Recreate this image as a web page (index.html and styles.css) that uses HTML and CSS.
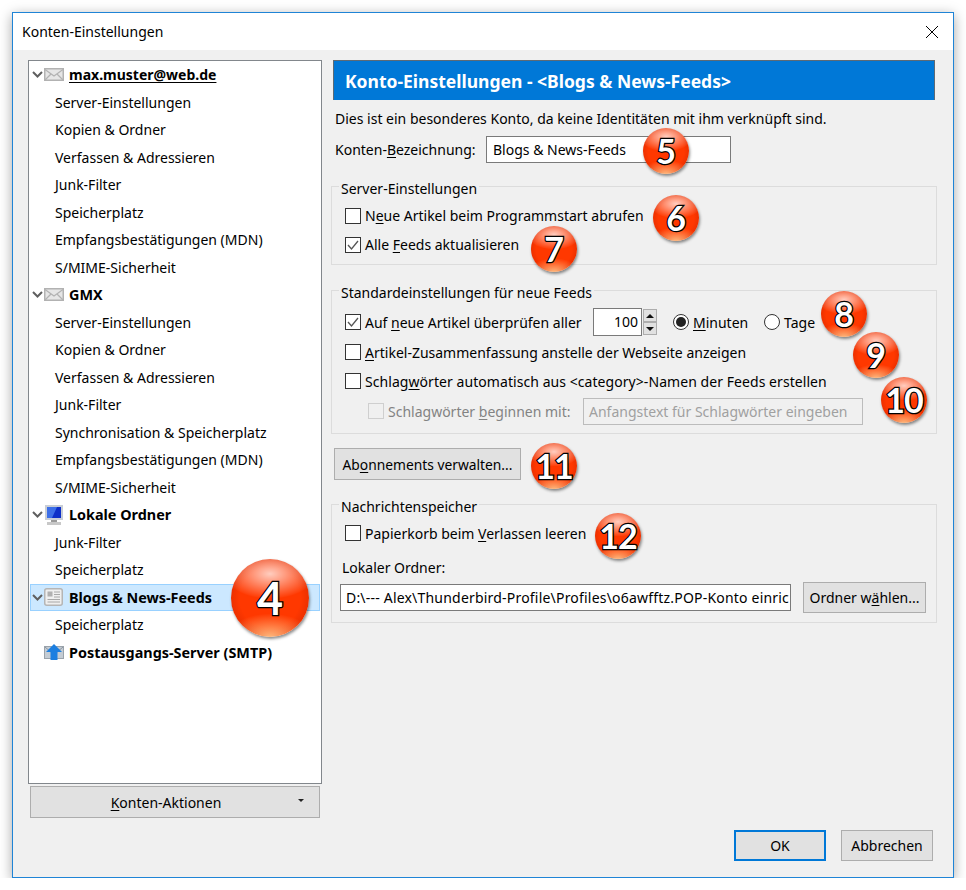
FILE: index.html
```html
<!DOCTYPE html>
<html lang="de">
<head>
    <meta charset="UTF-8">
    <title>Konten-Einstellungen</title>
    <link rel="stylesheet" href="styles.css">
</head>
<body>
    <div class="window">
        <div class="titlebar">
            <span>Konten-Einstellungen</span>
            <svg class="close" width="12" height="12" viewBox="0 0 12 12"><path d="M0 0L12 12M12 0L0 12" stroke="#000" stroke-width="1" fill="none"/></svg>
        </div>
        <div class="content">
            <div class="left-col">
                <div class="tree">
                    <div class="tree-head">
                        <svg class="chevron" width="11" height="7" viewBox="0 0 11 7"><path d="M1 1L5.5 5.5L10 1" stroke="#5f5f5f" stroke-width="2" fill="none"/></svg>
                        <svg class="acc-icon" width="20" height="13" viewBox="0 0 20 13"><rect x="0.75" y="0.75" width="18.5" height="11.5" fill="#e6e6e6" stroke="#b2b2b2" stroke-width="1.5"/><path d="M1 1.5L10 8L19 1.5M1 12L7 6M19 12L13 6" stroke="#b2b2b2" stroke-width="1.2" fill="none"/></svg>
                        <u class="current">max.muster@web.de</u>
                    </div>
                    <div class="tree-item">Server-Einstellungen</div>
                    <div class="tree-item">Kopien &amp; Ordner</div>
                    <div class="tree-item">Verfassen &amp; Adressieren</div>
                    <div class="tree-item">Junk-Filter</div>
                    <div class="tree-item">Speicherplatz</div>
                    <div class="tree-item">Empfangsbestätigungen (MDN)</div>
                    <div class="tree-item">S/MIME-Sicherheit</div>
                    <div class="tree-head">
                        <svg class="chevron" width="11" height="7" viewBox="0 0 11 7"><path d="M1 1L5.5 5.5L10 1" stroke="#5f5f5f" stroke-width="2" fill="none"/></svg>
                        <svg class="acc-icon" width="20" height="13" viewBox="0 0 20 13"><rect x="0.75" y="0.75" width="18.5" height="11.5" fill="#e6e6e6" stroke="#b2b2b2" stroke-width="1.5"/><path d="M1 1.5L10 8L19 1.5M1 12L7 6M19 12L13 6" stroke="#b2b2b2" stroke-width="1.2" fill="none"/></svg>
                        <span>GMX</span>
                    </div>
                    <div class="tree-item">Server-Einstellungen</div>
                    <div class="tree-item">Kopien &amp; Ordner</div>
                    <div class="tree-item">Verfassen &amp; Adressieren</div>
                    <div class="tree-item">Junk-Filter</div>
                    <div class="tree-item">Synchronisation &amp; Speicherplatz</div>
                    <div class="tree-item">Empfangsbestätigungen (MDN)</div>
                    <div class="tree-item">S/MIME-Sicherheit</div>
                    <div class="tree-head">
                        <svg class="chevron" width="11" height="7" viewBox="0 0 11 7"><path d="M1 1L5.5 5.5L10 1" stroke="#5f5f5f" stroke-width="2" fill="none"/></svg>
                        <svg class="acc-icon" width="20" height="20" viewBox="0 0 20 20"><rect x="1" y="0" width="18" height="15" fill="#c9ced6"/><rect x="3" y="2" width="14" height="11" fill="#0d2fc9"/><path d="M3 2H13L8 13H3Z" fill="#3d6fe8"/><rect x="7" y="15" width="6" height="2" fill="#9a9a9a"/><rect x="3" y="17" width="14" height="3" fill="#c8c8c8"/></svg>
                        <span>Lokale Ordner</span>
                    </div>
                    <div class="tree-item">Junk-Filter</div>
                    <div class="tree-item">Speicherplatz</div>
                    <div class="tree-head selected">
                        <svg class="chevron" width="11" height="7" viewBox="0 0 11 7"><path d="M1 1L5.5 5.5L10 1" stroke="#5f5f5f" stroke-width="2" fill="none"/></svg>
                        <svg class="acc-icon" width="19" height="18" viewBox="0 0 19 18"><rect x="0.75" y="0.75" width="17.5" height="16.5" rx="2" fill="#efefef" stroke="#b5b5b5" stroke-width="1.5"/><rect x="3.5" y="3.5" width="5" height="5" fill="#b0b0b0"/><path d="M10 4H16M10 6.5H16M10 9H16M3.5 11.5H16M3.5 14H16" stroke="#a8a8a8"/></svg>
                        <span>Blogs &amp; News-Feeds</span>
                    </div>
                    <div class="tree-item">Speicherplatz</div>
                    <div class="tree-head no-chevron">
                        <svg class="acc-icon" width="20" height="16" viewBox="0 0 20 16"><rect x="0.5" y="2.5" width="19" height="12" fill="#c4ccd4" stroke="#9aa3ab"/><path d="M1 3L8 9M19 3L12 9" stroke="#8d97a1"/><path d="M10 0L18 8H13.5V16H6.5V8H2Z" fill="#1c7fe0"/></svg>
                        <span>Postausgangs-Server (SMTP)</span>
                    </div>
                </div>
                <button class="btn actions-btn"><span><u>K</u>onten-Aktionen</span><i class="drop"></i></button>
            </div>

            <div class="right-col">
                <div class="panel-head">Konto-Einstellungen - &lt;Blogs &amp; News-Feeds&gt;</div>
                <div class="note">Dies ist ein besonderes Konto, da keine Identitäten mit ihm verknüpft sind.</div>
                <div class="name-row">
                    <label class="name-label">Konten-<u>B</u>ezeichnung:</label>
                    <div class="textbox name-box">Blogs &amp; News-Feeds</div>
                </div>

                <div class="group server-group">
                    <div class="legend">Server-Einstellungen</div>
                    <div class="row tall"><span class="check"></span><span>N<u>e</u>ue Artikel beim Programmstart abrufen</span></div>
                    <div class="row tall"><span class="check"><svg width="14" height="14" viewBox="0 0 14 14"><path d="M2 7L5.5 11L12 3" stroke="#555" stroke-width="1.3" fill="none"/></svg></span><span>Alle <u>F</u>eeds aktualisieren</span></div>
                </div>

                <div class="group feeds-group">
                    <div class="legend">Standardeinstellungen für neue Feeds</div>
                    <div class="row first">
                        <span class="check"><svg width="14" height="14" viewBox="0 0 14 14"><path d="M2 7L5.5 11L12 3" stroke="#555" stroke-width="1.3" fill="none"/></svg></span>
                        <span class="interval-label">Auf <u>n</u>eue Artikel überprüfen aller</span>
                        <div class="textbox spin-box">100</div>
                        <div class="spin">
                            <span class="spin-btn"><i class="arrow-up"></i></span>
                            <span class="spin-btn"><i class="arrow-down"></i></span>
                        </div>
                        <span class="radio on minutes"></span><span class="minutes-label"><u>M</u>inuten</span>
                        <span class="radio"></span><span>Ta<u>g</u>e</span>
                    </div>
                    <div class="row second"><span class="check"></span><span><u>A</u>rtikel-Zusammenfassung anstelle der Webseite anzeigen</span></div>
                    <div class="row third"><span class="check"></span><span class="tags-label">Schlag<u>w</u>örter automatisch aus &lt;category&gt;-Namen der Feeds erstellen</span></div>
                    <div class="row indented">
                        <span class="check disabled"></span>
                        <span class="prefix-label">Schlagwörter <u>b</u>eginnen mit:</span>
                        <div class="textbox prefix-box">Anfangstext für Schlagwörter eingeben</div>
                    </div>
                </div>

                <button class="btn subs-btn">Ab<u>o</u>nnements verwalten...</button>

                <div class="group store-group">
                    <div class="legend">Nachrichtenspeicher</div>
                    <div class="row store-row"><span class="check"></span><span>Papierkorb beim <u>V</u>erlassen leeren</span></div>
                    <div class="folder-label">Lokaler Ordner:</div>
                    <div class="folder-row">
                        <div class="textbox folder-box">D:\--- Alex\Thunderbird-Profile\Profiles\o6awfftz.POP-Konto einric</div>
                        <button class="btn folder-btn">Ordner w<u>ä</u>hlen...</button>
                    </div>
                </div>
            </div>
        </div>
        <div class="footer">
            <button class="btn dialog-btn default">OK</button>
            <button class="btn dialog-btn">Abbrechen</button>
        </div>

        <div class="badge big b4">4</div>
        <div class="badge b5">5</div>
        <div class="badge b6">6</div>
        <div class="badge b7">7</div>
        <div class="badge b8">8</div>
        <div class="badge b9">9</div>
        <div class="badge b10">10</div>
        <div class="badge b11">11</div>
        <div class="badge b12">12</div>
    </div>
</body>
</html>
```

FILE: styles.css
```css
body {
    margin: 0;
    padding: 12px 0 0 12px;
    background: #fff;
    font-family: "Noto Sans", "Liberation Sans", sans-serif;
    font-size: 14px;
    color: #000;
}
u {
    text-underline-offset: 2px;
}
.window {
    position: relative;
    width: 940px;
    height: 864px;
    border: 1px solid #1f84d6;
    background: #f0f0f0;
    box-shadow: 0 3px 12px rgba(0, 0, 0, .35);
    display: flex;
    flex-direction: column;
}
.titlebar {
    height: 37px;
    flex: none;
    background: #fff;
    display: flex;
    align-items: center;
    justify-content: space-between;
    padding: 0 15px 0 9px;
}
.content {
    display: flex;
    padding: 10px 0 0 15px;
}
.left-col {
    width: 294px;
    flex: none;
}
.tree {
    box-sizing: border-box;
    height: 724px;
    border: 1px solid #82878c;
    background: #fff;
    padding: 0 1px;
}
.tree-head, .tree-item {
    box-sizing: border-box;
    height: 27.5px;
    display: flex;
    align-items: center;
}
.tree-head {
    font-size: 14.4px;
    font-weight: bold;
    padding-left: 2px;
}
.tree-head span, .tree-head u {
    margin-left: 5px;
}
.tree-head .current {
    font-size: 14px;
}
.tree-item {
    padding-left: 25px;
}
.selected {
    background: #cce8ff;
    border: 1px solid #99d1ff;
    padding-left: 1px;
}
.selected span {
    margin-left: 6px;
}
.no-chevron {
    padding-left: 14px;
}
.chevron {
    flex: none;
    margin-right: 1px;
}
.acc-icon {
    flex: none;
    display: block;
}
.btn {
    font: inherit;
    color: #000;
    background: #e1e1e1;
    border: 1px solid #adadad;
    padding: 0;
    display: block;
}
.actions-btn {
    position: relative;
    width: 290px;
    height: 32px;
    margin: 2px 0 0 2px;
    padding-right: 18px;
    text-align: center;
}
.drop {
    position: absolute;
    right: 15px;
    top: 12px;
    border: 3px solid transparent;
    border-top: 3px solid #222;
    border-bottom: 0;
}
.right-col {
    width: 606px;
    margin-left: 9px;
    flex: none;
}
.panel-head {
    box-sizing: border-box;
    width: 602px;
    height: 40px;
    margin-left: 2px;
    background: #0078d7;
    border: 1px solid #5d6a75;
    border-bottom: 0;
    color: #fff;
    font-size: 17.5px;
    font-weight: bold;
    display: flex;
    align-items: center;
    padding-left: 11px;
}
.note {
    height: 20px;
    line-height: 20px;
    margin-top: 9px;
    padding-left: 4px;
}
.name-row {
    display: flex;
    align-items: center;
    margin-top: 7px;
    padding-left: 5px;
}
.name-label {
    width: 150px;
    margin-left: -1px;
    margin-right: 1px;
}
.textbox {
    box-sizing: border-box;
    height: 27px;
    line-height: 25px;
    background: #fff;
    border: 1px solid #7a7a7a;
    padding-left: 6px;
    white-space: nowrap;
    overflow: hidden;
}
.name-box {
    width: 245px;
}
.group {
    border: 1px solid #dcdcdc;
    padding: 0 0 0 13px;
}
.legend {
    width: fit-content;
    height: 20px;
    line-height: 20px;
    margin: -8px 0 0 -6px;
    padding: 0 2px;
    background: #f0f0f0;
}
.server-group {
    margin-top: 23px;
    padding-bottom: 5px;
}
.feeds-group {
    margin-top: 25px;
    padding-bottom: 8px;
}
.store-group {
    margin-top: 24px;
    padding-bottom: 9px;
}
.row {
    display: flex;
    align-items: center;
    height: 28px;
}
.row.tall {
    height: 29px;
}
.server-group .tall:nth-child(2) {
    margin-top: 2px;
}
.row.first {
    margin-top: 5px;
}
.row.second {
    margin-top: 2px;
}
.row.third {
    margin-top: 1px;
}
.tags-label {
    letter-spacing: .06px;
}
.row.indented {
    margin-top: 2px;
    padding-left: 23px;
}
.store-row {
    margin-top: 2px;
}
.check {
    box-sizing: border-box;
    width: 16px;
    height: 16px;
    flex: none;
    border: 1px solid #333;
    background: #fff;
    margin-right: 4px;
    display: flex;
    align-items: center;
    justify-content: center;
}
.check.disabled {
    border-color: #cfcfcf;
    background: #f0f0f0;
}
.interval-label {
    width: 228px;
    flex: none;
}
.spin-box {
    width: 49px;
    height: 28px;
    padding: 0 3px 0 0;
    text-align: right;
}
.spin {
    width: 14px;
    height: 26px;
    margin-left: 1px;
    display: flex;
    flex-direction: column;
}
.spin-btn {
    flex: 1;
    background: #e1e1e1;
    border: 1px solid #adadad;
    display: flex;
    align-items: center;
    justify-content: center;
}
.arrow-up, .arrow-down {
    border-left: 4px solid transparent;
    border-right: 4px solid transparent;
}
.arrow-up {
    border-bottom: 4px solid #111;
}
.arrow-down {
    border-top: 4px solid #111;
}
.radio {
    box-sizing: border-box;
    width: 16px;
    height: 16px;
    flex: none;
    border: 1px solid #333;
    border-radius: 50%;
    background: #fff;
    margin-right: 4px;
    display: flex;
    align-items: center;
    justify-content: center;
}
.radio.on::after {
    content: "";
    width: 10px;
    height: 10px;
    border-radius: 50%;
    background: #222;
}
.minutes {
    margin-left: 16px;
}
.minutes-label {
    width: 71px;
    flex: none;
}
.prefix-label {
    width: 195px;
    flex: none;
    color: #838383;
}
.prefix-box {
    width: 280px;
    background: #f0f0f0;
    border-color: #bcbcbc;
    color: #a0a0a0;
    padding-left: 5px;
}
.subs-btn {
    width: 187px;
    height: 32px;
    margin: 14px 0 0 3px;
    font-size: 13.8px;
}
.folder-label {
    height: 20px;
    line-height: 20px;
    margin: 11px 0 0 -3px;
}
.folder-row {
    display: flex;
    align-items: center;
    height: 31px;
    margin: 4px 0 0 -5px;
}
.folder-box {
    width: 451px;
    padding-left: 5px;
    letter-spacing: .2px;
}
.folder-btn {
    width: 123px;
    height: 31px;
    margin-left: 12px;
}
.footer {
    display: flex;
    justify-content: flex-end;
    gap: 15px;
    margin-top: 12px;
    padding-right: 20px;
}
.dialog-btn {
    width: 92px;
    height: 31px;
}
.dialog-btn.default {
    border: 2px solid #0078d7;
}
.badge {
    position: absolute;
    width: 46px;
    height: 46px;
    border-radius: 50%;
    display: flex;
    align-items: center;
    justify-content: center;
    font-family: Lato, "Liberation Sans", sans-serif;
    font-size: 34px;
    font-weight: bold;
    line-height: 1;
    color: #fff;
    -webkit-text-stroke: 2.5px #000;
    paint-order: stroke fill;
    background:
        radial-gradient(ellipse 58% 32% at 50% 19%, rgba(255, 255, 255, .75), rgba(255, 255, 255, .05) 95%, transparent 100%),
        radial-gradient(ellipse 55% 30% at 50% 100%, rgba(255, 190, 130, .95), rgba(255, 190, 130, 0) 100%),
        radial-gradient(circle at 50% 50%, #ff3800 55%, #c92200 100%);
    box-shadow: 1px 2px 3px rgba(0, 0, 0, .45);
}
.badge.big {
    width: 78px;
    height: 78px;
    font-size: 45px;
}
.b4 { left: 218px; top: 546px; }
.b5 { left: 630px; top: 115px; }
.b6 { left: 640px; top: 182px; }
.b7 { left: 518px; top: 213px; }
.b8 { left: 808px; top: 278px; }
.b9 { left: 840px; top: 319px; }
.b10 { left: 868px; top: 364px; letter-spacing: -1px; }
.b11 { left: 518px; top: 430px; letter-spacing: -1px; }
.b12 { left: 582px; top: 500px; letter-spacing: -1px; }
```
